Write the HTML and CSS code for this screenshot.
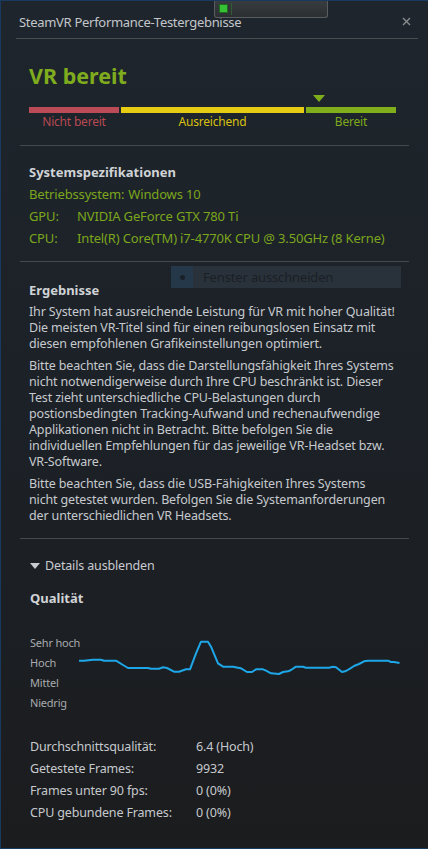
FILE: index.html
```html
<!DOCTYPE html>
<html lang="de">
<head>
    <meta charset="UTF-8">
    <meta name="viewport" content="width=device-width, initial-scale=1.0">
    <link rel="stylesheet" href="styles.css">
</head>
<body>
<div class="window">
    <!-- fremdes Fenster, das oben hineinragt -->
    <div class="peek">
        <span class="peek-led"></span>
        <span class="peek-bar"></span>
    </div>

    <div class="titlebar">
        <span class="title">SteamVR Performance-Testergebnisse</span>
        <svg class="close" width="9" height="9" viewBox="0 0 9 9">
            <path d="M1 1 L8 8 M8 1 L1 8" stroke="#8a8d90" stroke-width="1.4" fill="none"/>
        </svg>
    </div>

    <!-- Status -->
    <div class="status">
        <h1 class="status-title">VR bereit</h1>
        <div class="meter">
            <div class="meter-marker"><span class="marker"></span></div>
            <div class="meter-bars">
                <span class="bar bar-red"></span>
                <span class="bar bar-yellow"></span>
                <span class="bar bar-green"></span>
            </div>
            <div class="meter-labels">
                <span class="lbl-red">Nicht bereit</span>
                <span class="lbl-yellow">Ausreichend</span>
                <span class="lbl-green">Bereit</span>
            </div>
        </div>
    </div>

    <div class="section specs">
        <h2>Systemspezifikationen</h2>
        <div class="spec-row"><span class="spec-label">Betriebssystem:</span><span>Windows 10</span></div>
        <div class="spec-row"><span class="spec-label">GPU:</span><span>NVIDIA GeForce GTX 780 Ti</span></div>
        <div class="spec-row"><span class="spec-label">CPU:</span><span>Intel(R) Core(TM) i7-4770K CPU @ 3.50GHz (8 Kerne)</span></div>
    </div>

    <div class="section results">
        <div class="snip">
            <span class="snip-icon"><span class="snip-dot"></span></span>
            <span class="snip-text">Fenster ausschneiden</span>
        </div>
        <h2>Ergebnisse</h2>
        <p>Ihr System hat ausreichende Leistung für VR mit hoher Qualität! Die meisten VR-Titel sind für einen reibungslosen Einsatz mit diesen empfohlenen Grafikeinstellungen optimiert.</p>
        <p>Bitte beachten Sie, dass die Darstellungsfähigkeit Ihres Systems nicht notwendigerweise durch Ihre CPU beschränkt ist. Dieser Test zieht unterschiedliche CPU-Belastungen durch postionsbedingten Tracking-Aufwand und rechenaufwendige Applikationen nicht in Betracht. Bitte befolgen Sie die individuellen Empfehlungen für das jeweilige VR-Headset bzw. VR-Software.</p>
        <p>Bitte beachten Sie, dass die USB-Fähigkeiten Ihres Systems nicht&nbsp;getestet wurden. Befolgen Sie die Systemanforderungen der unterschiedlichen VR Headsets.</p>
    </div>

    <div class="details">
        <div class="details-toggle"><span class="caret"></span>Details ausblenden</div>
        <h2>Qualität</h2>

        <div class="chart">
            <div class="chart-labels">
                <span>Sehr hoch</span>
                <span>Hoch</span>
                <span>Mittel</span>
                <span>Niedrig</span>
            </div>
            <svg class="chart-plot" width="322" height="80" viewBox="78 633 322 80">
                <polyline fill="none" stroke="#1ea7e8" stroke-width="2" stroke-linejoin="round"
                    points="78,660.7 83,660.7 92,659.7 100,659.7 103,660.7 115,660.7 122,665 127,668 147,668 150,668.7 158,668.7 162,667.3 166,668 173,671.7 178,671.7 185,669.3 189,669.3 195,653.3 200,641.7 207,641.7 210,646.7 217,663.3 222,666.7 232,666.7 237,667.7 240,668.3 246,672 251,672 255,669.3 262,669.3 265,670.7 270,673.3 278,674 282,672 287,671.3 290,670 295,666.7 302,666.7 305,667.7 328,667.7 332,666.7 335,667.3 341,672 345,671 349,668.7 353,666 358,664 363,661.3 367,660.7 387,660.7 390,662 393,662 398.5,663"/>
            </svg>
        </div>

        <div class="stats">
            <span>Durchschnittsqualität:</span><span>6.4 (Hoch)</span>
            <span>Getestete Frames:</span><span>9932</span>
            <span>Frames unter 90 fps:</span><span>0 (0%)</span>
            <span>CPU gebundene Frames:</span><span>0 (0%)</span>
        </div>
    </div>
</div>
</body>
</html>
```

FILE: styles.css
```css
body {
    margin: 0;
    background: #1b1c1e;
    font-family: 'Noto Sans', sans-serif;
}

.window {
    position: relative;
    box-sizing: border-box;
    width: 428px;
    height: 849px;
    border-left: 1px solid #173a5e;
    border-top: 1px solid #173a5e;
    border-bottom: 1px solid #173a5e;
    background: linear-gradient(to bottom, #1e252c 0%, #1c2127 50%, #1b1c1e 100%);
    color: #c6c9cd;
    font-size: 12.5px;
    letter-spacing: -0.15px;
    overflow: hidden;
}

/* Fenster im Hintergrund */
.peek {
    position: absolute;
    left: 213px;
    top: -1px;
    width: 114px;
    height: 18px;
    box-sizing: border-box;
    border: 1px solid #5a5d60;
    border-top: none;
    border-radius: 0 0 3px 3px;
    background: linear-gradient(to bottom, #3a3d40, #2c2f32);
    display: flex;
    align-items: center;
    padding-left: 4px;
    gap: 3px;
    z-index: 2;
}

.peek-led {
    width: 7px;
    height: 7px;
    background: #35c234;
    border: 1px solid #1f6a1f;
}

.peek-bar {
    width: 1px;
    height: 12px;
    background: #2f5c33;
}

.titlebar {
    display: flex;
    justify-content: space-between;
    align-items: flex-start;
    box-sizing: border-box;
    height: 38px;
    margin: 0 10px 0 15px;
    padding: 11px 0 0 3px;
    border-bottom: 1px solid #4a4d51;
}

.title {
    font-size: 13px;
    line-height: 20px;
    letter-spacing: -0.3px;
    color: #c3c6ca;
}

.close {
    margin: 5px 7px 0 0;
}

.status {
    margin: 0 19px;
    padding: 24px 0 15px 9px;
    border-bottom: 1px solid #45484c;
}

.status-title {
    margin: 0;
    font-size: 21.5px;
    line-height: 26px;
    letter-spacing: 0;
    color: #7fab1e;
}

.meter {
    width: 367px;
}

.meter-marker {
    height: 18px;
    display: flex;
    align-items: flex-end;
    padding-left: 284px;
}

.marker {
    width: 0;
    height: 0;
    border-left: 6px solid transparent;
    border-right: 6px solid transparent;
    border-top: 7px solid #7fae1c;
    margin-bottom: 5px;
}

.meter-bars,
.meter-labels {
    display: grid;
    grid-template-columns: 90px 183px 90px;
    column-gap: 2px;
}

.bar {
    height: 6px;
}

.bar-red { background: #bb4b56; }
.bar-yellow { background: #e6cc12; }
.bar-green { background: #80af1b; }

.meter-labels {
    text-align: center;
    font-size: 12px;
    line-height: 17px;
    letter-spacing: -0.2px;
}

.lbl-red { color: #b84952; }
.lbl-yellow { color: #d8c010; }
.lbl-green { color: #7ea91c; }

.section {
    margin: 0 19px;
    padding-left: 9px;
    border-bottom: 1px solid #45484c;
}

h2 {
    margin: 0;
    font-size: 13px;
    line-height: 22px;
    letter-spacing: 0;
    font-weight: bold;
    color: #d0d3d6;
}

.specs {
    padding-top: 15px;
    padding-bottom: 12px;
}

.spec-row {
    display: flex;
    font-size: 13px;
    line-height: 22px;
    color: #7ca61c;
}

.spec-label {
    min-width: 44px;
    padding-right: 4px;
}

.results {
    position: relative;
    padding-top: 17px;
    padding-bottom: 8px;
}

.results h2 {
    margin-bottom: 3px;
}

.results p {
    margin: 0 0 6px 0;
    line-height: 16px;
    width: 372px;
}

/* Menüeintrag, der über dem Inhalt liegt */
.snip {
    position: absolute;
    left: 151px;
    top: 4px;
    width: 230px;
    height: 22px;
    display: flex;
    align-items: center;
    background: #29323b;
}

.snip-icon {
    width: 22px;
    height: 22px;
    background: #25384a;
    display: flex;
    align-items: center;
    justify-content: center;
}

.snip-dot {
    width: 5px;
    height: 5px;
    border-radius: 50%;
    background: #1a2028;
}

.snip-text {
    margin-left: 10px;
    color: #1b1f24;
    font-size: 13px;
}

.details {
    padding: 16px 0 0 29px;
}

.details-toggle {
    display: flex;
    align-items: center;
    line-height: 22px;
    color: #c8cbcf;
}

.caret {
    width: 0;
    height: 0;
    border-left: 5px solid transparent;
    border-right: 5px solid transparent;
    border-top: 6px solid #c8cbcf;
    margin-right: 5px;
}

.details h2 {
    margin-top: 10px;
}

.chart {
    display: flex;
    margin-top: 24px;
}

.chart-labels {
    display: flex;
    flex-direction: column;
    width: 49px;
    font-size: 11px;
    line-height: 20px;
    letter-spacing: -0.2px;
    white-space: nowrap;
    color: #a8abae;
}

.chart-plot {
    display: block;
}

.stats {
    display: grid;
    grid-template-columns: 166px auto;
    margin-top: 23px;
    line-height: 22px;
    color: #c6c9cd;
}
```
